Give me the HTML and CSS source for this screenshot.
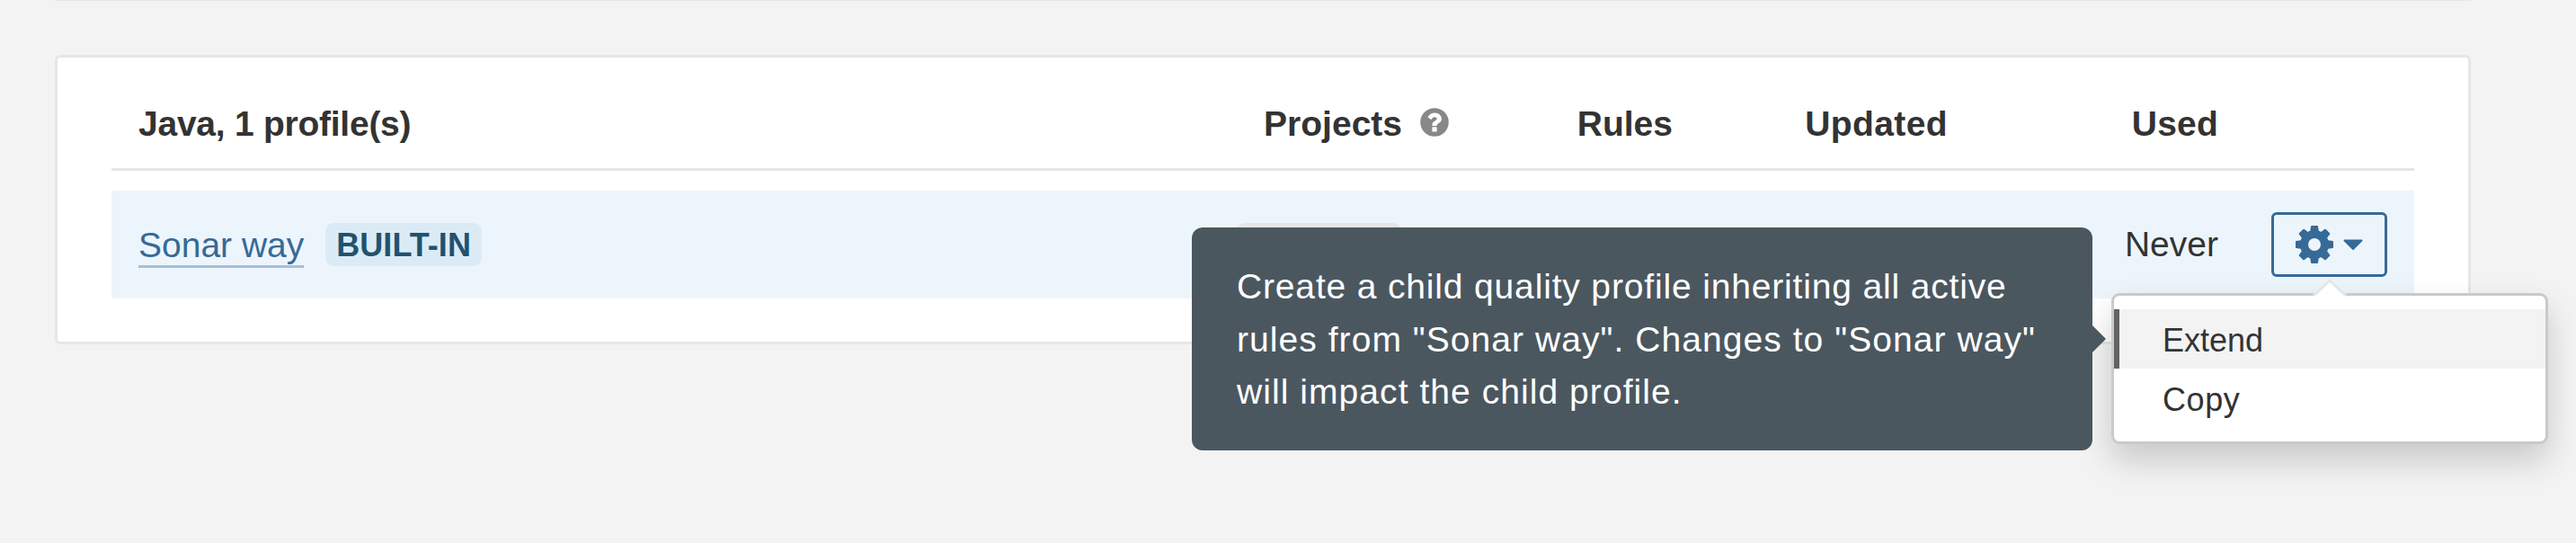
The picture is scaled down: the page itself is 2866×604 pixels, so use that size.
FILE: index.html
```html
<!DOCTYPE html>
<html lang="en">
<head>
<meta charset="utf-8">
<title>Quality Profiles</title>
<link rel="stylesheet" href="styles.css">
</head>
<body>
<main class="page">
  <section class="card">
    <div class="row row-head">
      <div class="cell head-language">Java, 1 profile(s)</div>
      <div class="cell cell-right cell-projects"><span>Projects</span><svg class="help" viewBox="0 0 16 16"><path fill-rule="evenodd" d="M9.167 12.375v-1.75a.284.284 0 0 0-.082-.21.284.284 0 0 0-.21-.082h-1.75a.284.284 0 0 0-.21.082.284.284 0 0 0-.082.21v1.75c0 .085.028.155.082.21a.284.284 0 0 0 .21.082h1.75a.284.284 0 0 0 .21-.082.284.284 0 0 0 .082-.21zM11.5 6.25c0-.535-.169-1.03-.506-1.486a3.452 3.452 0 0 0-1.262-1.057 3.462 3.462 0 0 0-1.55-.374c-1.476 0-2.603.647-3.381 1.942-.091.146-.067.273.073.383l1.203.911a.27.27 0 0 0 .173.055c.091 0 .173-.036.237-.11.322-.412.583-.692.784-.838.207-.146.468-.219.784-.219.291 0 .551.079.779.237.228.158.342.337.342.538 0 .231-.061.416-.182.556-.122.14-.328.276-.62.41-.382.17-.733.432-1.051.788-.319.355-.479.737-.479 1.144v.328c0 .085.028.155.082.21a.284.284 0 0 0 .21.082h1.75a.284.284 0 0 0 .21-.082.284.284 0 0 0 .082-.21c0-.115.066-.266.196-.45.131-.185.296-.336.497-.452.194-.109.343-.197.447-.26.103-.065.243-.17.419-.318.177-.149.312-.295.406-.437.094-.143.179-.327.255-.551.076-.225.114-.467.114-.722zM15 8A7 7 0 1 1 1 8a7 7 0 0 1 14 0z"/></svg></div>
      <div class="cell cell-right head-rules">Rules</div>
      <div class="cell cell-right head-updated">Updated</div>
      <div class="cell cell-right head-used">Used</div>
    </div>
    <div class="row row-profile">
      <div class="cell cell-name"><a class="link">Sonar way</a><span class="badge">BUILT-IN</span></div>
      <div class="cell cell-right"><span class="badge badge-default"></span></div>
      <div class="cell"></div>
      <div class="cell"></div>
      <div class="cell cell-right cell-used">Never</div>
      <div class="cell cell-right cell-actions">
        <div class="dropdown">
          <button class="button" type="button">
            <svg class="gear" viewBox="-21 -21 42 42">
              <circle class="gear-ring" r="11.500"/>
              <path id="teeth" d="M-5-13.500L-4-20.300Q-3.900-21-3-21H3Q3.900-21 4-20.300L5-13.500zM-5 13.500L-4 20.300Q-3.900 21-3 21H3Q3.900 21 4 20.300L5 13.500z"/>
              <use href="#teeth" transform="rotate(45)"/>
              <use href="#teeth" transform="rotate(90)"/>
              <use href="#teeth" transform="rotate(135)"/>
            </svg>
            <svg class="caret" viewBox="0 0 22 13"><path d="M1.500 1.500h19L11 11z"/></svg>
          </button>
          <div class="menu">
            <svg class="menu-arrow" viewBox="0 0 40 20"><path class="arrow-fill" d="M2 20L20 2l18 18z"/><path class="arrow-line" d="M2 19L20 2l18 17"/></svg>
            <a class="menu-item menu-item-active">Extend</a>
            <a class="menu-item menu-item-copy">Copy</a>
          </div>
          <div class="tooltip">Create a child quality profile inheriting all active<br><span class="spaced">rules from "Sonar way". Changes to "Sonar way"<br>will impact the child profile.</span></div>
        </div>
      </div>
    </div>
  </section>
</main>
</body>
</html>
```
FILE: styles.css
```css
* { box-sizing: border-box; }
body {
  margin: 0;
  height: 604px;
  overflow: hidden;
  background: #f3f3f3;
  color: #333;
  font: 39px/60px "Liberation Sans", Arial, sans-serif;
}
.page {
  margin-left: 61px;
  width: 2688px;
  border-top: 1px solid #e6e6e6;
  padding-top: 60px;
}
.card {
  height: 322px;
  padding: 42px 60px 0;
  border: 3px solid #e6e6e6;
  border-radius: 6px;
  background: #fff;
}
.row {
  display: grid;
  grid-template-columns: 1220px 270px 248px 305px 302px 187px;
  align-items: center;
  padding-right: 30px;
}
.row-head {
  height: 84px;
  padding-bottom: 18px;
  border-bottom: 3px solid #e6e6e6;
  font-weight: bold;
}
.row-profile {
  height: 120px;
  margin-top: 22px;
  background: #edf5fc;
}
.cell { display: flex; align-items: center; padding-left: 30px; white-space: nowrap; }
.cell-right { justify-content: flex-end; }
.cell-projects { gap: 18px; }
.cell-used { padding-right: 1px; }
.head-language { letter-spacing: -0.25px; }
.head-rules { padding-right: 1px; }
.head-updated { letter-spacing: 0.4px; }
.head-used { padding-right: 1px; letter-spacing: 0.2px; }
.help { width: 36px; height: 36px; margin-top: -3px; fill: #888; }
.link {
  height: 52px;
  line-height: 53px;
  border-bottom: 3px solid #a4c0d6;
  color: #366a97;
}
.badge {
  flex: none;
  height: 48px;
  margin-left: 24px;
  padding: 0 12px;
  border-radius: 9px;
  background: #dbebf6;
  color: #23516f;
  font-size: 36px;
  line-height: 50px;
  font-weight: bold;
  letter-spacing: 0.05px;
}
.badge-default { width: 183px; margin-right: 55px; background: #e6e6e6; }
.dropdown { position: relative; }
.button {
  display: flex;
  align-items: center;
  gap: 11px;
  width: 129px;
  height: 72px;
  padding: 0 24px;
  border: 3px solid #366a97;
  border-radius: 6px;
  background: transparent;
}
.gear { flex: none; width: 42px; height: 42px; fill: #366a97; }
.gear-ring { fill: none; stroke: #366a97; stroke-width: 9; }
.caret { flex: none; width: 22px; height: 13px; fill: #366a97; stroke: #366a97; stroke-width: 2; stroke-linejoin: round; }
.menu {
  position: absolute;
  top: 90px;
  left: -178px;
  width: 486px;
  height: 168px;
  padding: 15px 0;
  border: 3px solid #cacaca;
  border-radius: 9px;
  background: #fff;
  box-shadow: 0 18px 36px rgba(0, 0, 0, 0.175);
}
.menu-arrow { position: absolute; top: -19px; left: 220px; width: 40px; height: 20px; }
.arrow-fill { fill: #fff; }
.arrow-line { fill: none; stroke: #e6e6e6; stroke-width: 3; }
.menu-item {
  display: block;
  height: 66px;
  padding-left: 54px;
  border-left: 0 solid #636363;
  font-size: 36px;
  line-height: 69px;
}
.menu-item-active { padding-left: 48px; border-left-width: 6px; background: #f3f3f3; }
.menu-item-copy { letter-spacing: 0.6px; }
.tooltip {
  position: absolute;
  top: 17px;
  right: 328px;
  width: 1002px;
  height: 248px;
  padding: 37px 0 0 50px;
  border-radius: 12px;
  background: #4b575f;
  color: #fff;
  line-height: 58.5px;
  letter-spacing: 0.84px;
}
.spaced { letter-spacing: 1.06px; }
.tooltip::after {
  content: "";
  position: absolute;
  top: 109px;
  left: 100%;
  border: 15px solid transparent;
  border-right-width: 0;
  border-left-color: #4b575f;
}
```
